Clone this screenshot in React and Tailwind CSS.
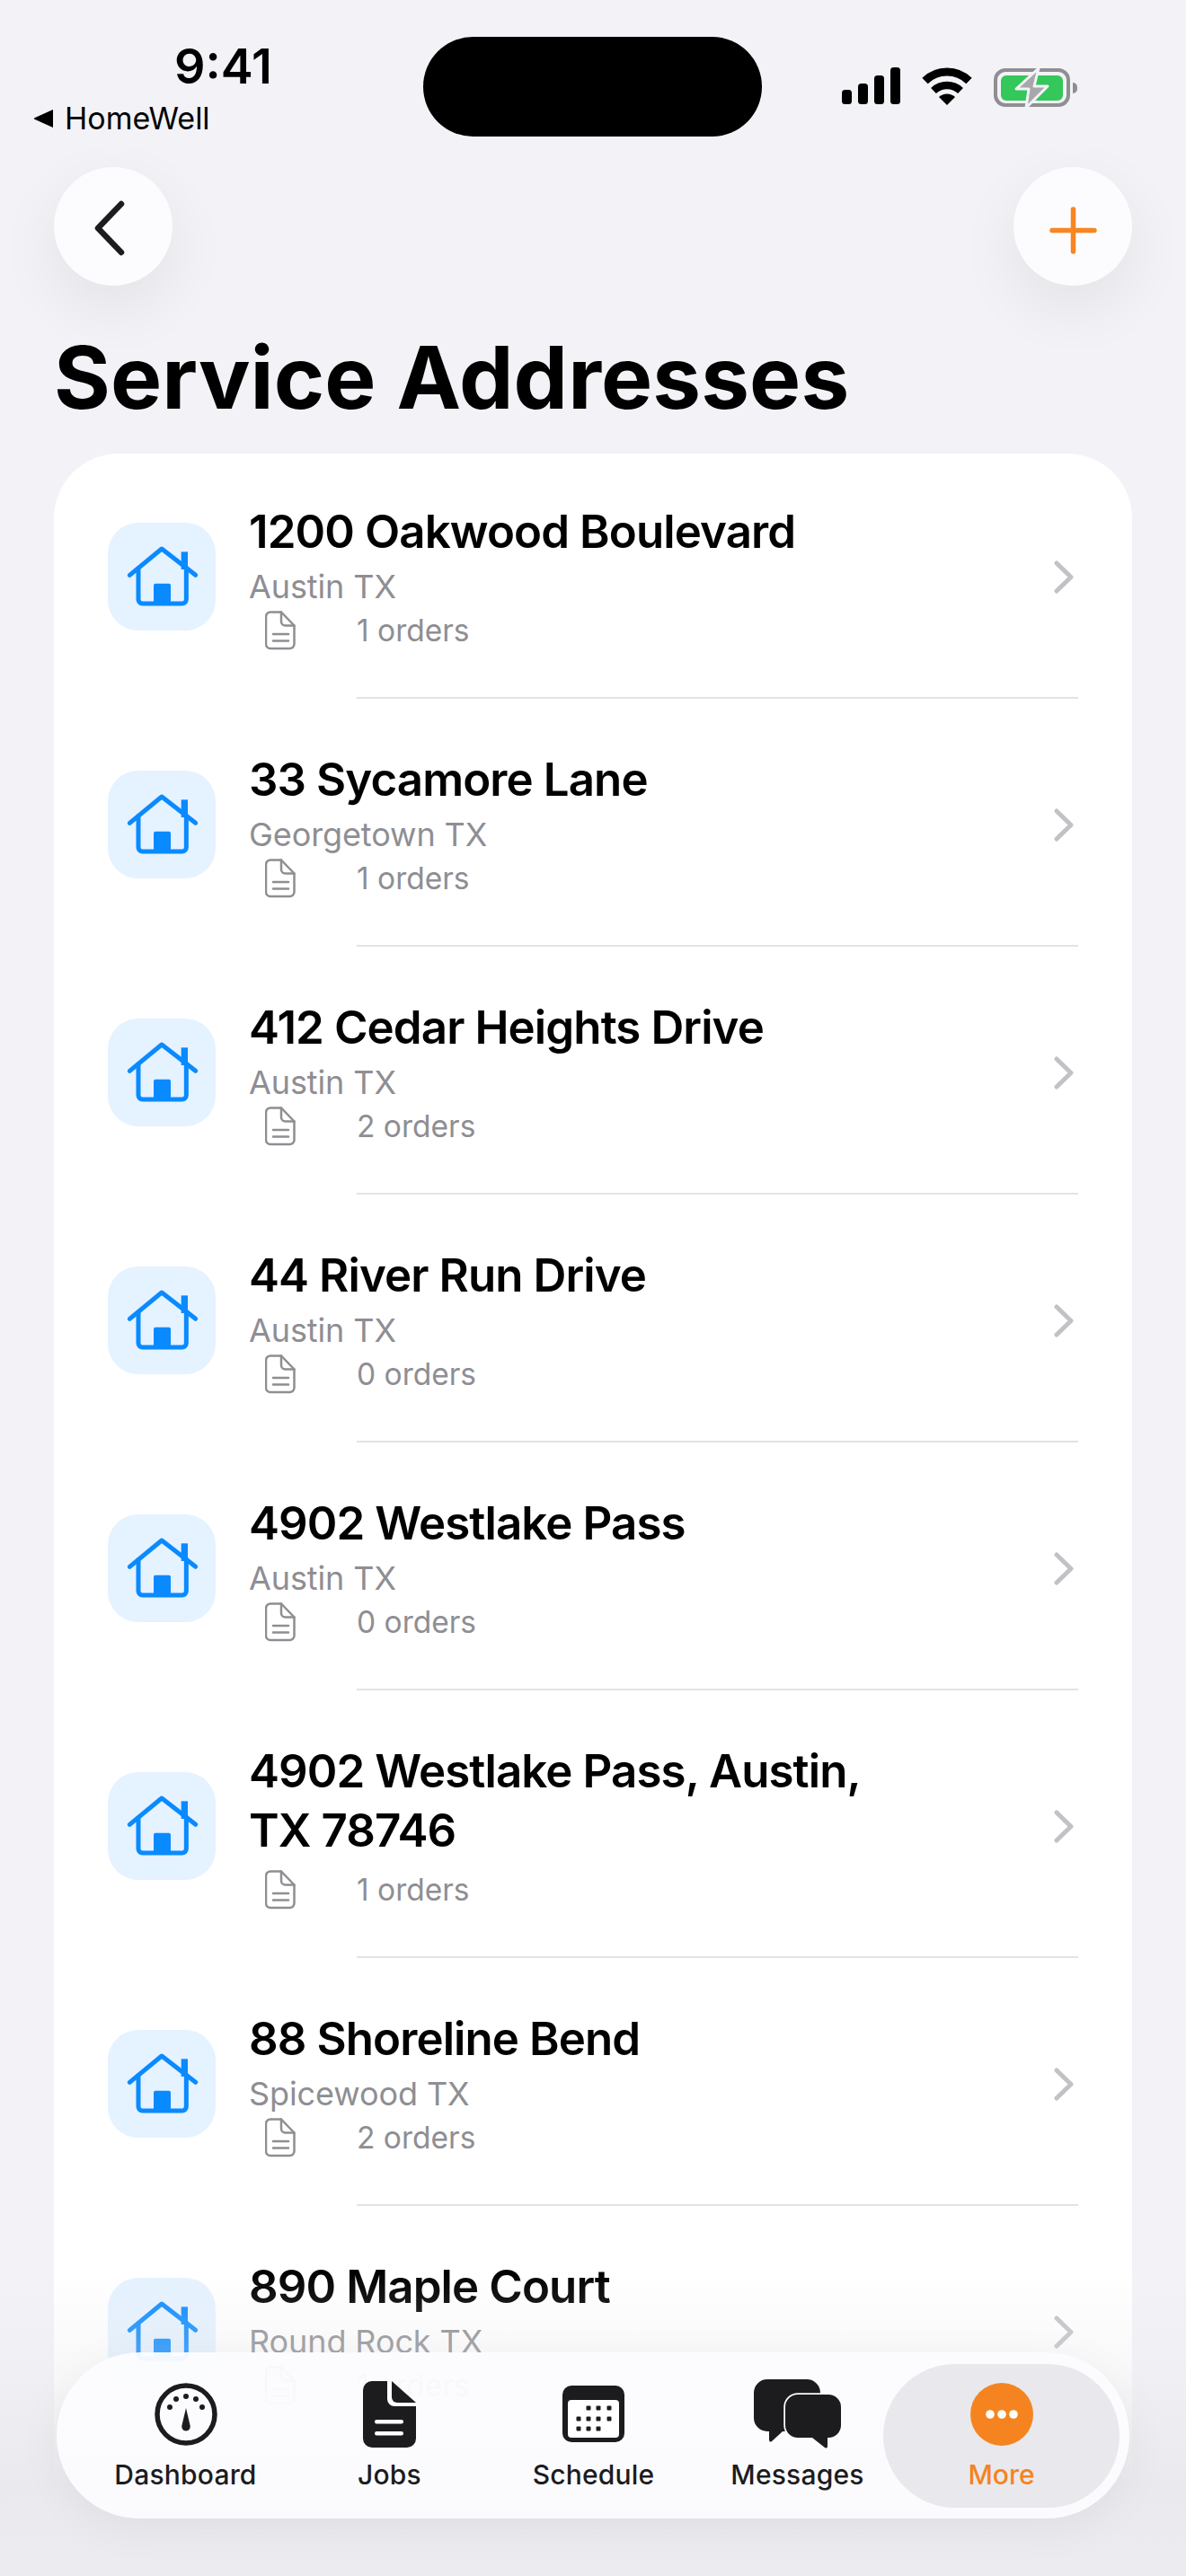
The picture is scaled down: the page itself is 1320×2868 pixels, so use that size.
import React from 'react';

const addresses = [
    { street: '1200 Oakwood Boulevard', city: 'Austin', state: 'TX', orders: 1 },
    { street: '33 Sycamore Lane', city: 'Georgetown', state: 'TX', orders: 1 },
    { street: '412 Cedar Heights Drive', city: 'Austin', state: 'TX', orders: 2 },
    { street: '44 River Run Drive', city: 'Austin', state: 'TX', orders: 0 },
    { street: '4902 Westlake Pass', city: 'Austin', state: 'TX', orders: 0 },
    { street: '4902 Westlake Pass, Austin, TX 78746', city: '', state: '', orders: 1 },
    { street: '88 Shoreline Bend', city: 'Spicewood', state: 'TX', orders: 2 },
    { street: '890 Maple Court', city: 'Round Rock', state: 'TX', orders: 1 },
];

const HouseIcon = () => (
    <svg width="120" height="120" viewBox="0 0 360 360" fill="none" stroke="#0a8aff" strokeWidth="15" strokeLinecap="round" strokeLinejoin="round">
        <path d="M73 175 L180 87 L293 175" />
        <path d="M102 152 V256 a14 14 0 0 0 14 14 H248 a14 14 0 0 0 14 -14 V150" />
        <path d="M256 108 V145" strokeWidth="22" strokeLinecap="square" />
        <rect x="153" y="203" width="57" height="67" rx="6" fill="#0a8aff" stroke="none" />
    </svg>
);

const DocIcon = () => (
    <svg width="34" height="44" viewBox="0 0 34 44" fill="none" stroke="#8e8e93" strokeWidth="2.5" strokeLinejoin="round" strokeLinecap="round">
        <path d="M6 1.5 H18 L32.5 16.5 V37 a5 5 0 0 1 -5 5 H6 a5 5 0 0 1 -5 -5 V6.5 a5 5 0 0 1 5 -5 Z" />
        <path d="M18 1.5 V12 a4.5 4.5 0 0 0 4.5 4.5 H32.5" />
        <path d="M9 26 H26 M9 33.5 H26" />
    </svg>
);

const Chevron = ({ color = '#c2c2c6', className = '' }) => (
    <svg width="22" height="37" viewBox="0 0 22 37" fill="none" stroke={color} strokeWidth="5" strokeLinecap="round" strokeLinejoin="round" className={className}>
        <path d="M3 3 L19 18.500 L3 34" />
    </svg>
);

const SignalIcon = () => (
    <svg width="65" height="41" viewBox="0 0 65 41" fill="#000">
        <rect x="0" y="25" width="11" height="16" rx="3.500" />
        <rect x="18" y="18" width="11" height="23" rx="3.500" />
        <rect x="36" y="9" width="11" height="32" rx="3.500" />
        <rect x="54" y="0" width="11" height="41" rx="3.500" />
    </svg>
);

const WifiIcon = () => (
    <svg width="58" height="42" viewBox="0 0 58 42" fill="none" stroke="#000">
        <path d="M4.500 15 A35 35 0 0 1 53.500 15" strokeWidth="9" />
        <path d="M14 26 A22 22 0 0 1 44 26" strokeWidth="8.500" />
        <path d="M20 33 A13 13 0 0 1 38 33 L29 42 Z" fill="#000" stroke="none" />
    </svg>
);

const BatteryIcon = () => (
    <svg width="94" height="46" viewBox="0 0 94 46" fill="none">
        <rect x="2" y="3" width="81" height="39" rx="11" stroke="#8e8e93" strokeWidth="4" />
        <rect x="8" y="9" width="69" height="28" rx="6" fill="#34c759" />
        <path d="M88 17 a5 5 0 0 1 5 5 v2 a5 5 0 0 1 -5 5 Z" fill="#8e8e93" />
        <path d="M50 1 L25 24 H39 L36 45 L60 21 H45 Z" fill="#a8a8ac" stroke="#f2f2f7" strokeWidth="3" strokeLinejoin="round" />
    </svg>
);

const GaugeIcon = () => (
    <svg width="70" height="70" viewBox="0 0 70 70" fill="#1c1c1e">
        <circle cx="35" cy="35" r="32" fill="none" stroke="#1c1c1e" strokeWidth="5.500" />
        <circle cx="17" cy="27" r="3" />
        <circle cx="24" cy="18" r="3" />
        <circle cx="35" cy="15" r="3" />
        <circle cx="46" cy="18" r="3" />
        <circle cx="53" cy="27" r="3" />
        <path d="M35 28 L39.500 47 a4.800 4.800 0 1 1 -9 0 Z" />
    </svg>
);

const JobsIcon = () => (
    <svg width="59" height="74" viewBox="0 0 59 74" fill="#1c1c1e">
        <path d="M10 0 H27 V20 a8 8 0 0 0 8 8 H59 V64 a10 10 0 0 1 -10 10 H10 A10 10 0 0 1 0 64 V10 A10 10 0 0 1 10 0 Z" />
        <path d="M32 0 L59 24 H38 a6 6 0 0 1 -6 -6 Z" />
        <rect x="13" y="43" width="32" height="4.500" rx="2.250" fill="#fff" />
        <rect x="13" y="56" width="32" height="4.500" rx="2.250" fill="#fff" />
    </svg>
);

const CalendarIcon = () => (
    <svg width="69" height="63" viewBox="0 0 69 63" fill="#1c1c1e">
        <rect width="69" height="63" rx="10" />
        <rect x="6" y="16" width="57" height="42" rx="4" fill="#fff" />
        {[[29, 25], [40, 25], [52, 25], [18, 37], [29, 37], [40, 37], [52, 37], [18, 48], [29, 48], [40, 48]].map(([x, y]) => (
            <rect key={`${x}-${y}`} x={x - 2.500} y={y - 2.500} width="5" height="5" rx="1" />
        ))}
    </svg>
);

const MessagesIcon = () => (
    <svg width="98" height="77" viewBox="0 0 98 77" fill="#1c1c1e">
        <path d="M15 0 H59 a15 15 0 0 1 15 15 V43 a15 15 0 0 1 -15 15 H32 L20 69 a2 2 0 0 1 -3 -1 V58 H15 A15 15 0 0 1 0 43 V15 A15 15 0 0 1 15 0 Z" />
        <path d="M49 17 H83 a14 14 0 0 1 14 14 V51 a14 14 0 0 1 -14 14 H82 V75 a2 2 0 0 1 -3 1 L65 65 H49 A14 14 0 0 1 35 51 V31 A14 14 0 0 1 49 17 Z" stroke="#fcfcfe" strokeWidth="3.500" paintOrder="stroke" />
    </svg>
);

const MoreIcon = () => (
    <svg width="70" height="70" viewBox="0 0 70 70" fill="#fff">
        <circle cx="35" cy="35" r="35" fill="#f58420" />
        <circle cx="22" cy="35" r="4.800" />
        <circle cx="35" cy="35" r="4.800" />
        <circle cx="48" cy="35" r="4.800" />
    </svg>
);

const tabs = [
    { label: 'Dashboard', icon: <GaugeIcon /> },
    { label: 'Jobs', icon: <JobsIcon /> },
    { label: 'Schedule', icon: <CalendarIcon /> },
    { label: 'Messages', icon: <MessagesIcon /> },
];

const AddressRow = ({ street, city, state, orders }) => (
    <div>
        <div className="flex items-center pl-[60px] pr-[65px]">
            <div className="w-[120px] h-[120px] mt-[6px] shrink-0 rounded-[34px] bg-[#e5f2ff]">
                <HouseIcon />
            </div>
            <div className="flex-1 ml-[37px] pt-[57px] pb-[41px]">
                <p className="max-w-[730px] text-[51px] leading-[66px] font-semibold text-black tracking-[-0.9px]">{street}</p>
                {city && (
                    <p className="h-[44px] pt-[12px] text-[36px] leading-[32px] tracking-[-0.1px] text-[#8e8e93]">
                        {city} {state}
                    </p>
                )}
                <div className="flex items-center h-[66px] pl-[18px] gap-[68px]">
                    <DocIcon />
                    <span className="text-[33.5px] leading-[44px] text-[#8e8e93]">{orders} orders</span>
                </div>
            </div>
            <Chevron className="mt-[6px] shrink-0" />
        </div>
        <div className="h-[2px] ml-[337px] mr-[60px] bg-[#e3e3e6]" />
    </div>
);

export default function App() {
    return (
        <div className="relative h-[2868px] w-[1320px] overflow-hidden bg-[#f2f2f7] font-['Inter',sans-serif]">
            {/* Status bar */}
            <div className="flex h-[186px]">
                <div className="w-[471px] shrink-0">
                    <p className="mt-[38px] pl-[194px] text-[54px] leading-[72px] font-semibold text-black">9:41</p>
                    <div className="flex items-center gap-[12px] pl-[38px] mt-[8px]">
                        <svg width="22" height="22" viewBox="0 0 22 22" fill="#000">
                            <path d="M21 1 V21 L1 12 a1 1 0 0 1 0 -2 Z" />
                        </svg>
                        <span className="text-[34px] leading-[28px] text-black">HomeWell</span>
                    </div>
                </div>
                <div className="w-[377px] h-[111px] mt-[41px] shrink-0 rounded-[56px] bg-black" />
                <div className="flex items-start gap-[23px] pl-[89px] pt-[75px]">
                    <SignalIcon />
                    <WifiIcon />
                    <BatteryIcon />
                </div>
            </div>

            {/* Nav buttons */}
            <div className="flex justify-between px-[60px]">
                <button className="flex items-center justify-center w-[132px] h-[132px] rounded-full bg-[#fcfcfe] shadow-[0_24px_70px_rgba(0,0,0,0.07)]">
                    <svg width="40" height="62" viewBox="0 0 40 62" fill="none" stroke="#1c1c1e" strokeWidth="6.500" strokeLinecap="round" strokeLinejoin="round" className="mt-[4px] -ml-[6px]">
                        <path d="M32 4 L6 31 L32 58" />
                    </svg>
                </button>
                <button className="flex items-center justify-center w-[132px] h-[132px] rounded-full bg-[#fcfcfe] shadow-[0_24px_70px_rgba(0,0,0,0.07)]">
                    <svg width="53" height="53" viewBox="0 0 53 53" fill="none" stroke="#f78623" strokeWidth="5.500" strokeLinecap="round" className="mt-[8px]">
                        <path d="M26.500 3 V50 M3 26.500 H50" />
                    </svg>
                </button>
            </div>

            <h1 className="mt-[44px] px-[60px] text-[96px] leading-[116px] font-bold text-black tracking-[0.1px]">Service Addresses</h1>

            {/* Address list */}
            <div className="flow-root mt-[27px] ml-[60px] w-[1200px] h-[2400px] rounded-[72px] bg-white">
                <div className="-mt-[3px]">
                    {addresses.map((address) => (
                        <AddressRow key={address.street} {...address} />
                    ))}
                </div>
            </div>

            {/* Fade behind the tab bar */}
            <div className="absolute inset-x-0 bottom-0 h-[340px] bg-[linear-gradient(to_bottom,rgba(234,234,238,0)_0%,rgba(234,234,238,0.35)_35%,rgba(234,234,238,1)_70%,rgba(236,236,240,1)_100%)]" />

            {/* Tab bar */}
            <nav className="absolute left-[63px] top-[2619px] flex items-center w-[1194px] h-[185px] pl-[30px] rounded-[93px] bg-[#fcfcfe]/[0.95] shadow-[0_10px_50px_rgba(0,0,0,0.05)]">
                {tabs.map((tab) => (
                    <div key={tab.label} className="flex flex-col items-center w-[227px] shrink-0">
                        <div className="flex items-center justify-center h-[78px]">{tab.icon}</div>
                        <span className="mt-[8px] text-[30px] leading-[40px] font-medium tracking-[0.2px] text-[#1c1c1e]">{tab.label}</span>
                    </div>
                ))}
                <div className="flex flex-col items-center justify-center w-[263px] h-[160px] -ml-[18px] rounded-[80px] bg-[#e9e9ed]">
                    <div className="flex items-center justify-center h-[78px]"><MoreIcon /></div>
                    <span className="mt-[8px] text-[30px] leading-[40px] font-medium text-[#f58420]">More</span>
                </div>
            </nav>
        </div>
    );
}
